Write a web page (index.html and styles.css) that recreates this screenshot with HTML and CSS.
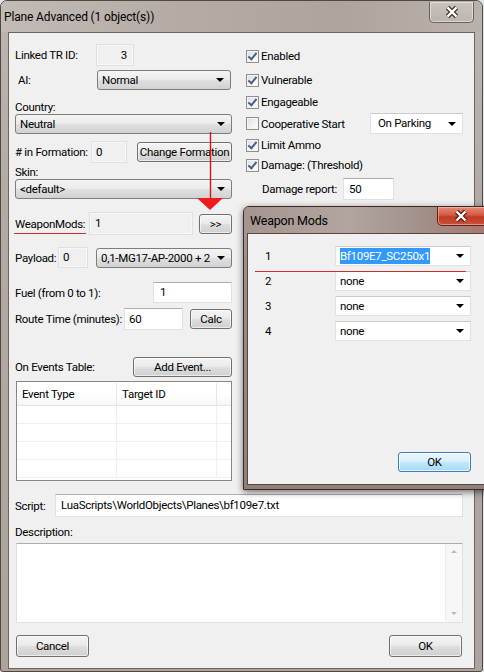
FILE: index.html
```html
<!DOCTYPE html>
<html>
<head>
<meta charset="utf-8">
<title>Plane Advanced</title>
<link rel="stylesheet" href="styles.css">
</head>
<body>
<div class="window">
  <div class="titlebar">
    <span class="title">Plane Advanced (1 object(s))</span>
    <div class="close-main">
      <svg width="16" height="14" viewBox="0 0 16 14"><path d="M3.5 2.5 L12.5 11.5 M12.5 2.5 L3.5 11.5" stroke="#3b3733" stroke-width="4.6"/><path d="M3.5 2.5 L12.5 11.5 M12.5 2.5 L3.5 11.5" stroke="#ffffff" stroke-width="2.4"/></svg>
    </div>
  </div>
  <div class="client">
    <div class="top">
      <div class="lcol">
        <div class="row r-linked"><span class="lbl l-linked">Linked TR ID:</span><div class="field ro f-linked">3</div></div>
        <div class="row r-ai"><span class="lbl l-ai">AI:</span><div class="combo gray c-ai"><span class="ctext">Normal</span><i class="arr"></i></div></div>
        <div class="lbl-block lb-country">Country:</div>
        <div class="combo gray c-full"><span class="ctext">Neutral</span><i class="arr"></i></div>
        <div class="row r-form"><span class="lbl l-form"># in Formation:</span><div class="field ro f-form">0</div><div class="btn b-form">Change Formation</div></div>
        <div class="lbl-block lb-skin">Skin:</div>
        <div class="combo gray c-full"><span class="ctext">&lt;default&gt;</span><i class="arr"></i></div>
        <div class="row r-wm"><span class="lbl l-wm">WeaponMods:</span><div class="field ro f-wm">1</div><div class="btn b-wm">&gt;&gt;</div></div>
        <div class="row r-pay"><span class="lbl l-pay">Payload:</span><div class="field ro f-pay">0</div><div class="combo gray c-pay"><span class="ctext">0,1-MG17-AP-2000 + 2</span><i class="arr"></i></div></div>
        <div class="row r-fuel"><span class="lbl l-fuel">Fuel (from 0 to 1):</span><div class="field f-fuel">1</div></div>
        <div class="row r-route"><span class="lbl l-route">Route Time (minutes):</span><div class="field f-route">60</div><div class="btn b-calc">Calc</div></div>
        <div class="row r-ev"><span class="lbl l-ev">On Events Table:</span><div class="btn b-add">Add Event...</div></div>
        <div class="table">
          <div class="thead"><div class="th c1">Event Type</div><div class="th c2">Target ID</div><div class="th c3"></div></div>
          <div class="trow"><div class="td c1"></div><div class="td c2"></div><div class="td c3"></div></div>
          <div class="trow"><div class="td c1"></div><div class="td c2"></div><div class="td c3"></div></div>
          <div class="trow"><div class="td c1"></div><div class="td c2"></div><div class="td c3"></div></div>
          <div class="trow"><div class="td c1"></div><div class="td c2"></div><div class="td c3"></div></div>
        </div>
      </div>
      <div class="rcol">
        <div class="chk-row ck1"><span class="cb on"></span><span class="ck-lbl">Enabled</span></div>
        <div class="chk-row ck2"><span class="cb on"></span><span class="ck-lbl">Vulnerable</span></div>
        <div class="chk-row ck3"><span class="cb on"></span><span class="ck-lbl">Engageable</span></div>
        <div class="chk-row ck4"><span class="cb"></span><span class="ck-lbl coop">Cooperative Start</span><div class="combo white c-park"><span class="ctext">On Parking</span><i class="arr"></i></div></div>
        <div class="chk-row ck5"><span class="cb on"></span><span class="ck-lbl">Limit Ammo</span></div>
        <div class="chk-row ck6"><span class="cb on"></span><span class="ck-lbl">Damage: (Threshold)</span></div>
        <div class="row r-dmg"><span class="lbl l-dmg">Damage report:</span><div class="field f-dmg">50</div></div>
      </div>
    </div>
    <div class="row r-script"><span class="lbl l-script">Script:</span><div class="field f-script">LuaScripts\WorldObjects\Planes\bf109e7.txt</div></div>
    <div class="lbl-block lb-desc">Description:</div>
    <div class="textarea">
      <div class="sb"><span class="sb-up"></span><span class="sb-dn"></span></div>
    </div>
    <div class="row r-btns"><div class="btn b-cancel">Cancel</div><div class="btn b-ok">OK</div></div>
  </div>
</div>

<svg class="red-arrow" width="28" height="80" viewBox="0 0 28 80">
  <line x1="14.5" y1="0" x2="14.5" y2="67" stroke="#d01818" stroke-width="1.4"/>
  <polygon points="1,66 27,66 14,78" fill="#ee1c1c"/>
</svg>
<div class="red-ul wm-ul"></div>

<div class="subwin">
  <div class="sub-title">
    <span class="sub-title-text">Weapon Mods</span>
    <div class="close-red">
      <svg width="16" height="14" viewBox="0 0 16 14"><path d="M3.5 2.5 L12.5 11.5 M12.5 2.5 L3.5 11.5" stroke="#5a1c12" stroke-width="4.6"/><path d="M3.5 2.5 L12.5 11.5 M12.5 2.5 L3.5 11.5" stroke="#ffffff" stroke-width="2.4"/></svg>
    </div>
  </div>
  <div class="sub-client">
    <div class="wm-list">
      <div class="wm-row"><span class="wm-num">1</span><div class="combo white wm-c"><span class="ctext"><span class="sel">Bf109E7_SC250x1</span></span><i class="arr"></i></div></div>
      <div class="wm-row"><span class="wm-num">2</span><div class="combo white wm-c"><span class="ctext">none</span><i class="arr"></i></div></div>
      <div class="wm-row"><span class="wm-num">3</span><div class="combo white wm-c"><span class="ctext">none</span><i class="arr"></i></div></div>
      <div class="wm-row"><span class="wm-num">4</span><div class="combo white wm-c"><span class="ctext">none</span><i class="arr"></i></div></div>
      <div class="btn ok-blue">OK</div>
    </div>
  </div>
</div>
<div class="red-ul sub-ul"></div>
</body>
</html>
```
FILE: styles.css
```css
* { box-sizing: border-box; }
html, body { margin: 0; padding: 0; }
body {
  width: 484px;
  height: 672px;
  overflow: hidden;
  position: relative;
  background: #dfe5ea;
  font-family: "Roboto", "Open Sans", sans-serif;
  font-size: 11.5px;
  letter-spacing: -0.3px;
  color: #000;
}

/* main window */
.window {
  width: 483px;
  height: 672px;
  border: 1px solid #4f4843;
  border-radius: 7px 7px 3px 3px;
  background: linear-gradient(180deg, #bdb5b0 0%, #b3aaa4 30%, #aca39c 100%);
}
.titlebar {
  height: 31px;
  display: flex;
  align-items: flex-start;
  background: linear-gradient(90deg, #c2bbb6 0%, #b5aca6 35%, #aea49d 70%, #b9b1ab 100%);
  border-radius: 6px 6px 0 0;
}
.title {
  margin: 8px 0 0 3px;
  font-size: 12px;
  letter-spacing: -0.15px;
  line-height: 16px;
  color: #000;
}
.close-main {
  margin: 1px 8px 0 auto;
  width: 45px;
  height: 21px;
  border: 1px solid #6b625c;
  border-top: none;
  border-radius: 0 0 5px 5px;
  background: linear-gradient(180deg, rgba(255,255,255,0.25), rgba(255,255,255,0.08));
  box-shadow: inset 0 0 0 1px rgba(255,255,255,0.45);
  display: flex;
  align-items: center;
  justify-content: center;
}

.client {
  margin-left: 7px;
  width: 467px;
  height: 637px;
  border: 1px solid #6c645e;
  background: #f0f0f0;
  padding: 11px 11px 0 6px;
  display: flex;
  flex-direction: column;
}
.top {
  display: grid;
  grid-template-columns: 217px 217px;
  column-gap: 14px;
  align-items: start;
}
.lcol, .rcol { display: flex; flex-direction: column; }
.row { display: flex; align-items: center; }
.lbl { flex: none; white-space: nowrap; }
.lbl-block { height: 14px; line-height: 14px; }

/* generic controls */
.field {
  flex: none;
  height: 22px;
  line-height: 20px;
  border: 1px solid #dde2e8;
  border-top-color: #abadb3;
  background: #fff;
  padding: 0 4px;
  white-space: nowrap;
  overflow: hidden;
}
.field.ro { background: #f0f0f0; border-color: #dde0e4; box-shadow: inset 0 0 0 1px #f7f7f7; }
.combo {
  flex: none;
  position: relative;
  height: 20px;
  line-height: 18px;
  padding: 0 18px 0 4px;
  white-space: nowrap;
  overflow: hidden;
}
.combo.gray {
  border: 1px solid #7d7d7d;
  border-radius: 3px;
  background: linear-gradient(180deg, #f4f4f4 0%, #ececec 45%, #dedede 55%, #d2d2d2 100%);
}
.combo.white {
  border: 1px solid #dfe3e8;
  border-top-color: #c9ccd2;
  background: #fff;
}
.ctext { display: block; overflow: hidden; }
.arr {
  position: absolute;
  right: 6px;
  top: 50%;
  margin-top: -2px;
  width: 0; height: 0;
  border-left: 4px solid transparent;
  border-right: 4px solid transparent;
  border-top: 4px solid #000;
}
.btn {
  flex: none;
  height: 20px;
  line-height: 18px;
  text-align: center;
  border: 1px solid #707070;
  border-radius: 3px;
  background: linear-gradient(180deg, #f3f3f3 0%, #ebebeb 45%, #dddddd 55%, #cfcfcf 100%);
  box-shadow: inset 0 0 0 1px rgba(255,255,255,0.6);
  white-space: nowrap;
}

/* left column rows */
.r-linked { height: 22px; }
.l-linked { width: 81px; }
.f-linked { width: 38px; text-align: right; padding-right: 6px; }
.r-ai { height: 20px; margin-top: 4px; }
.l-ai { width: 82px; padding-left: 3px; }
.c-ai { width: 134px; }
.lb-country { margin-top: 10px; }
.c-full { width: 217px; }
.r-form { height: 22px; margin-top: 7px; }
.l-form { width: 76px; }
.f-form { width: 36px; }
.b-form { width: 95px; margin-left: 10px; margin-top: -1px; }
.lb-skin { margin-top: 2px; }
.r-wm { height: 23px; margin-top: 13px; }
.l-wm { width: 74px; }
.f-wm { width: 104px; height: 23px; padding-left: 5px; }
.b-wm { width: 33px; margin-left: 6px; }
.r-pay { height: 21px; margin-top: 12px; }
.l-pay { width: 43px; }
.f-pay { width: 30px; height: 21px; line-height: 19px; }
.c-pay { width: 136px; margin-left: 8px; }
.r-fuel { height: 21px; margin-top: 14px; }
.l-fuel { width: 138px; }
.f-fuel { width: 79px; height: 21px; line-height: 19px; padding-left: 6px; }
.r-route { height: 22px; margin-top: 5px; }
.l-route { width: 109px; }
.f-route { width: 59px; }
.b-calc { width: 42px; margin-left: 7px; }
.r-ev { height: 20px; margin-top: 27px; }
.l-ev { width: 118px; }
.b-add { width: 99px; }

.table {
  margin-top: 4px;
  margin-left: 1px;
  width: 216px;
  height: 100px;
  border: 1px solid #828790;
  background: #fff;
  padding-top: 1px;
}
.thead {
  display: flex;
  height: 23px;
  border-bottom: 1px solid #e3e5e8;
  background: linear-gradient(180deg, #ffffff 0%, #ffffff 50%, #f5f6f7 100%);
}
.th { height: 100%; line-height: 22px; border-right: 1px solid #e4e6e9; padding-left: 5px; white-space: nowrap; }
.c1 { width: 100px; }
.c2 { width: 100px; }
.c3 { flex: 1; }
.thead .c3 { border-right: none; }
.trow { display: flex; height: 18px; border-bottom: 1px solid #f0f0f0; }
.td { height: 100%; border-right: 1px solid #f0f0f0; }
.trow .c3 { border-right: none; }

/* right column */
.chk-row { display: flex; align-items: center; }
.ck1 { height: 22px; margin-top: 1px; }
.ck2 { height: 22px; margin-top: 2px; }
.ck3 { height: 22px; }
.ck4 { height: 21px; }
.ck5 { height: 20px; margin-top: 1px; }
.ck6 { height: 20px; }
.cb {
  flex: none;
  width: 13px;
  height: 13px;
  border: 1px solid #8e8f8f;
  background: linear-gradient(135deg, #dcdcdc 0%, #f4f4f4 60%, #ffffff 100%);
  box-shadow: inset 0 0 0 1px #f4f4f4;
  position: relative;
}
.cb.on::after {
  content: "";
  position: absolute;
  left: 3px;
  top: 0px;
  width: 3px;
  height: 7px;
  border-right: 2px solid #4a5e8e;
  border-bottom: 2px solid #4a5e8e;
  transform: rotate(40deg);
}
.ck-lbl { margin-left: 2px; white-space: nowrap; }
.coop { width: 109px; }
.c-park { width: 93px; height: 21px; line-height: 19px; padding-left: 7px; }
.r-dmg { height: 22px; margin-top: 3px; padding-left: 16px; }
.l-dmg { width: 81px; }
.f-dmg { width: 51px; padding-left: 5px; }

/* bottom */
.r-script { height: 23px; margin-top: 13px; }
.l-script { width: 40px; }
.f-script { width: 408px; height: 23px; padding-left: 5px; }
.lb-desc { margin-top: 8px; }
.textarea {
  margin-top: 4px;
  margin-left: 1px;
  width: 447px;
  height: 80px;
  border: 1px solid #dde2e8;
  border-top-color: #abadb3;
  background: #fff;
  display: flex;
  justify-content: flex-end;
}
.sb {
  width: 17px;
  height: 100%;
  background: #f7f7f7;
  border-left: 1px solid #ececec;
  display: flex;
  flex-direction: column;
  justify-content: space-between;
  align-items: center;
  padding: 6px 0 7px;
}
.sb-up, .sb-dn { width: 0; height: 0; border-left: 3px solid transparent; border-right: 3px solid transparent; }
.sb-up { border-bottom: 3px solid #b8b8b8; }
.sb-dn { border-top: 3px solid #b8b8b8; }
.r-btns { height: 22px; margin-top: 12px; }
.b-cancel { width: 73px; height: 22px; line-height: 20px; margin-left: 1px; }
.b-ok { width: 73px; height: 22px; line-height: 20px; margin-left: auto; margin-right: 1px; }

/* annotations */
.red-arrow { position: absolute; left: 196px; top: 132px; }
.red-ul { position: absolute; height: 1px; background: #d42a2a; }
.wm-ul { left: 14px; top: 233px; width: 72px; }
.sub-ul { left: 255px; top: 271px; width: 211px; background: #c83030; }

/* weapon mods sub-window */
.subwin {
  position: absolute;
  left: 243px;
  top: 206px;
  width: 260px;
  height: 284px;
  border: 1px solid #3d2b24;
  border-radius: 6px 6px 0 0;
  background: linear-gradient(180deg, #a99d97 0%, #9b8e87 20%, #8f817a 100%);
  box-shadow: 0 2px 7px rgba(0,0,0,0.55);
}
.sub-title {
  height: 26px;
  display: flex;
  align-items: flex-start;
  background: linear-gradient(90deg, #a4958e 0%, #b2a59f 40%, #a09089 70%, #a8716a 100%);
  border-radius: 5px 5px 0 0;
}
.sub-title-text { margin: 6px 0 0 6px; font-size: 12.5px; letter-spacing: -0.2px; line-height: 16px; }
.close-red {
  margin-left: auto;
  margin-right: -1px;
  width: 66px;
  height: 19px;
  border: 1px solid #5c231a;
  border-top: none;
  border-radius: 0 0 0 5px;
  background: linear-gradient(180deg, #e48a78 0%, #d45a44 45%, #c23a22 55%, #c8503a 100%);
  box-shadow: inset 0 0 0 1px rgba(255,210,200,0.5);
  display: flex;
  align-items: center;
  padding-left: 15px;
}
.sub-client {
  margin-left: 3px;
  width: 252px;
  height: 252px;
  border: 1px solid #5a463d;
  background: #f0f0f0;
  padding: 12px 0 0 17px;
}
.wm-list { width: 206px; display: flex; flex-direction: column; }
.wm-row { display: flex; align-items: center; height: 20px; margin-bottom: 5px; }
.wm-num { width: 70px; flex: none; }
.wm-c { width: 136px; }
.sel { background: #3399ff; color: #fff; padding: 1px 0; }
.ok-blue {
  margin-top: 106px;
  margin-left: 133px;
  width: 73px;
  height: 20px;
  border-color: #3c7fb1;
  background: linear-gradient(180deg, #eaf6fd 0%, #d9f0fc 45%, #bee6fd 55%, #a7d9f5 100%);
  box-shadow: inset 0 0 0 1px rgba(255,255,255,0.7);
}
```
